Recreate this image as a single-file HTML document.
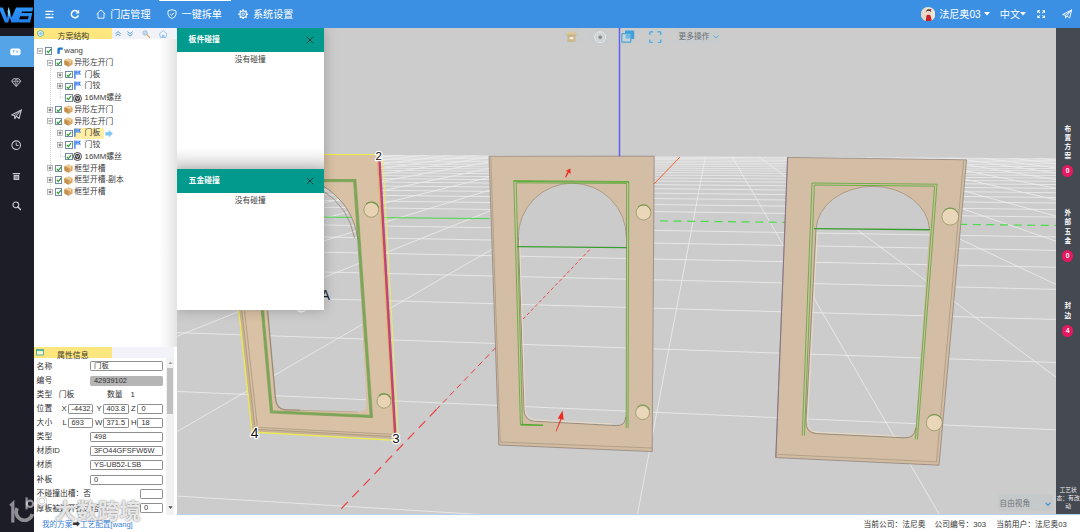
<!DOCTYPE html>
<html lang="zh-CN">
<head>
<meta charset="utf-8">
<title>一键拆单</title>
<style>
*{box-sizing:border-box;margin:0;padding:0}
html,body{width:1080px;height:532px;overflow:hidden;background:#fff}
body{position:relative;font-family:"Liberation Sans","Noto Sans CJK SC",sans-serif;font-size:7.8px;color:#333;-webkit-text-size-adjust:none}
.abs{position:absolute}
/* header */
#hdr{position:absolute;left:0;top:0;width:1080px;height:28px;background:#3c90e4;color:#fff}
#logo{position:absolute;left:0;top:0;width:33.8px;height:28px;background:#000;overflow:hidden}
#hdr .nav{position:absolute;top:0;height:28px;line-height:29.4px;font-size:10.1px;color:#fff;white-space:nowrap}
#hdr svg{position:absolute}
#actline{position:absolute;left:159px;top:0;width:72px;height:1.4px;background:#fff}
/* left side */
#side{position:absolute;left:0;top:28px;width:33.8px;height:504px;background:#1d1d27}
#side .act{position:absolute;left:0;top:8.2px;width:33.8px;height:30.8px;background:#56a4e8}
#side svg{position:absolute;left:10px}
/* left panel */
#lp{position:absolute;left:34px;top:28px;width:142.8px;height:486.5px;background:#fff;overflow:hidden;z-index:2}
.tabbar{position:absolute;left:0;width:142.8px;height:11.2px;background:#f2f3f8}
.tabbar .tab{position:absolute;left:0;top:0;width:78.4px;height:11.2px;background:#fee67e}
.tabbar .tt{position:absolute;left:23.6px;top:3px;font-size:7.9px;line-height:11px;color:#3a3a2a;white-space:nowrap}
.tr{position:absolute;height:11.7px;line-height:11.7px;white-space:nowrap;font-size:7.8px;color:#3c3c3c}
.cb{position:absolute;width:7.4px;height:7.4px;border:0.8px solid #73899f;background:#fff}
.cb svg{position:absolute;left:0;top:0}
.ex{position:absolute;width:5.4px;height:5.4px;border:0.7px solid #a9a9a9;background:#fff}
.ex:before{content:"";position:absolute;left:0.7px;top:1.65px;width:2.6px;height:0.7px;background:#555}
.ex.p:after{content:"";position:absolute;left:1.65px;top:0.7px;width:0.7px;height:2.6px;background:#333}
.pl{position:absolute;font-size:7.8px;line-height:10px;white-space:nowrap;color:#333}
.inp{position:absolute;height:10px;border:0.8px solid #8f8f8f;border-radius:1.2px;background:#fff;font-size:7.4px;line-height:8.6px;padding-left:3px;color:#333;white-space:nowrap;overflow:hidden}
/* scene */
#scene{position:absolute;left:176px;top:28px;width:882px;height:489px;overflow:hidden;background:#cccccc}
svg.scene{position:absolute;left:0;top:0}
/* panels */
.pnwrap{position:absolute;left:34px;top:28px;width:1046px;height:486.5px;overflow:hidden;pointer-events:none}
.pn{position:absolute;left:143px;width:146.6px;background:#fff;box-shadow:0 0 12px rgba(0,0,0,.24)}
.pn .ph{position:absolute;left:0;top:0;width:100%;height:23.4px;background:#019a8d;color:#fff;font-weight:bold;font-size:7.8px;line-height:24.6px;padding-left:11.6px}
.pn .px{position:absolute;right:9.6px;top:7.6px}
.pn .pb{position:absolute;left:0;top:26.9px;width:100%;text-align:center;font-size:7.8px;line-height:10px;color:#444}
/* right bar */
#rb{position:absolute;left:1058px;top:28px;width:22px;height:489px;background:#454952;color:#fff}
#rb .v{position:absolute;left:0;width:22px;text-align:center;font-size:6.6px;line-height:8.3px;font-weight:bold;color:#fff}
#rb .bd{position:absolute;left:5.6px;width:11.4px;height:11.4px;border-radius:50%;background:#e5195f;color:#fff;font-size:6.8px;line-height:11.4px;text-align:center;font-weight:bold}
/* footer */
#ft{position:absolute;left:34px;top:517px;width:1046px;height:15px;background:#fff;border-top:1px solid #b7d2ea;font-size:7.6px;line-height:13px;color:#333}
/* toolbar */
.tb{position:absolute;top:29px;height:15.4px;background:rgba(196,204,206,.55);border-radius:2px}
</style>
</head>
<body>
<!-- HEADER -->
<div id="hdr">
  <div id="actline"></div>
  <!-- menu icon -->
  <svg style="left:44.6px;top:9.6px" width="9" height="9" viewBox="0 0 9 9"><path d="M0.4,1.3H8.4M0.4,4.4H5.4M0.4,7.5H8.4" stroke="#fff" stroke-width="1.3" fill="none"/><path d="M6.6,4.4H8.4" stroke="#fff" stroke-width="1.3"/></svg>
  <!-- refresh -->
  <svg style="left:70.4px;top:9.2px" width="10" height="10" viewBox="0 0 10 10"><path d="M8,3.2A3.6,3.6 0 1 0 8.4,6.2" stroke="#fff" stroke-width="1.5" fill="none"/><path d="M9.2,0.8V4.4H5.6Z" fill="#fff"/></svg>
  <!-- home -->
  <svg style="left:95.6px;top:9.2px" width="10" height="10" viewBox="0 0 10 10"><path d="M0.6,5.2L5,0.9L9.4,5.2M2,4.4V9.2H8V4.4" stroke="#fff" stroke-width="0.9" fill="none"/></svg>
  <div class="nav" style="left:110.2px">门店管理</div>
  <!-- shield -->
  <svg style="left:167px;top:9.2px" width="10" height="10" viewBox="0 0 10 10"><path d="M5,0.7L9,1.9V5.2Q9,8 5,9.5Q1,8 1,5.2V1.9Z" stroke="#fff" stroke-width="0.9" fill="none"/><path d="M3.2,5L4.6,6.3L7,3.8" stroke="#fff" stroke-width="0.9" fill="none"/></svg>
  <div class="nav" style="left:181.6px">一键拆单</div>
  <!-- gear -->
  <svg style="left:238.4px;top:9px" width="10.4" height="10.4" viewBox="0 0 10 10"><circle cx="5" cy="5" r="3.1" stroke="#fff" stroke-width="1" fill="none"/><circle cx="5" cy="5" r="1.2" stroke="#fff" stroke-width="0.8" fill="none"/><path d="M5,0.3V1.9M5,8.1V9.7M0.3,5H1.9M8.1,5H9.7M1.7,1.7L2.8,2.8M7.2,7.2L8.3,8.3M1.7,8.3L2.8,7.2M7.2,2.8L8.3,1.7" stroke="#fff" stroke-width="1.5"/></svg>
  <div class="nav" style="left:253px">系统设置</div>
  <!-- avatar -->
  <svg style="left:920.6px;top:7px" width="14.4" height="14.4" viewBox="0 0 14.4 14.4"><defs><clipPath id="avc"><circle cx="7.2" cy="7.2" r="7.2"/></clipPath></defs><g clip-path="url(#avc)"><rect width="14.4" height="14.4" fill="#efe6da"/><rect x="0" y="0" width="5" height="14.4" fill="#e8d8c4"/><path d="M4.6,14.4L5.4,8.6Q7.4,6.6 9.6,8.4L11,14.4Z" fill="#c3262a"/><circle cx="7.6" cy="5.2" r="2.3" fill="#f3d3bd"/><path d="M5,5.2Q5.2,2 7.8,2.2Q10.4,2.4 10.2,5.6Q9.4,3.6 7.6,3.8Q5.8,3.8 5,5.2Z" fill="#4a2a22"/><path d="M8.6,1.6L10.6,2.6L9.4,3.6Z" fill="#b5262a"/></g></svg>
  <div class="nav" style="left:939.2px">法尼奥03</div>
  <svg style="left:983.6px;top:12.4px" width="6" height="4" viewBox="0 0 6 4"><path d="M0,0H6L3,3.4Z" fill="#fff"/></svg>
  <div class="nav" style="left:999.8px">中文</div>
  <svg style="left:1020.4px;top:12.4px" width="6" height="4" viewBox="0 0 6 4"><path d="M0,0H6L3,3.4Z" fill="#fff"/></svg>
  <!-- fullscreen -->
  <svg style="left:1036.6px;top:10px" width="8.4" height="8.4" viewBox="0 0 8.4 8.4"><path d="M0.3,0.3H3V1.2L1.9,1.3L3.4,2.8L2.8,3.4L1.3,1.9L1.2,3H0.3ZM8.1,0.3V3H7.2L7.1,1.9L5.6,3.4L5,2.8L6.5,1.3L5.4,1.2V0.3ZM0.3,8.1V5.4H1.2L1.3,6.5L2.8,5L3.4,5.6L1.9,7.1L3,7.2V8.1ZM8.1,8.1H5.4V7.2L6.5,7.1L5,5.6L5.6,5L7.1,6.5L7.2,5.4H8.1Z" fill="#fff"/></svg>
  <!-- plane -->
  <svg style="left:1062px;top:9px" width="10.4" height="10.4" viewBox="0 0 10.4 10.4"><path d="M0.6,5.6L9.8,0.8L7.6,9L5,6.8L3.6,9.2L3.4,6.2Z" stroke="#fff" stroke-width="0.9" fill="none" stroke-linejoin="round"/><path d="M3.4,6.2L9.8,0.8L5,6.8" stroke="#fff" stroke-width="0.8" fill="none"/></svg>
  <div id="logo">
    <svg style="left:0;top:0" width="34" height="28" viewBox="0 0 34 28"><defs><linearGradient id="lg" x1="0" y1="0" x2="0" y2="1"><stop offset="0" stop-color="#2f96fb"/><stop offset="1" stop-color="#2380ea"/></linearGradient></defs>
    <path fill="url(#lg)" d="M-1.4,7.5L2.9,7.5L7.2,18.6L8.65,7L11.5,17.8L16.1,7.5L33.1,7.5L32.4,11.4L22,11.4L21.4,12.9L32.3,12.9L30.1,22.6L18.2,22.6L19,19.3L28,19.3L28.6,16.3L20.2,16.3L18,22.6L11.4,22.6L9.6,17.6L8.3,22.6L4.9,22.6Z"/>
    <path fill="#7fdcf2" d="M8.65,7L10.2,12.6L9.4,16.6L8.4,15L7.6,11.6Z"/></svg>
  </div>
</div>

<!-- LEFT SIDE NAV -->
<div id="side">
  <div class="act"></div>
  <!-- item1: card icon -->
  <svg style="top:20px;left:10.4px" width="11" height="8" viewBox="0 0 11 8"><rect x="0.3" y="0.4" width="10.2" height="6.8" rx="1.9" fill="#fff"/><path d="M2.8,2.4H4.6M3.7,2.4V5.2M6,2.4L7,3.8L8.2,2.4M7,3.8V5.2" stroke="#56a4e8" stroke-width="0.7" fill="none"/></svg>
  <!-- diamond -->
  <svg style="top:50.4px;left:11.4px" width="10.4" height="9.4" viewBox="0 0 11 10"><path d="M2.6,0.8H8.4L10.4,3.4L5.5,9.2L0.6,3.4Z" stroke="#c9cacf" stroke-width="1" fill="none" stroke-linejoin="round"/><path d="M0.8,3.5H10.2M4,3.5L5.5,8.4L7,3.5L5.5,1.2Z" stroke="#c9cacf" stroke-width="0.7" fill="none"/></svg>
  <!-- plane -->
  <svg style="top:80.6px;left:11px" width="11" height="11" viewBox="0 0 10.4 10.4"><path d="M0.6,5.6L9.8,0.8L7.6,9L5,6.8L3.6,9.2L3.4,6.2Z" stroke="#c9cacf" stroke-width="1" fill="none" stroke-linejoin="round"/><path d="M3.4,6.2L9.8,0.8L5,6.8" stroke="#c9cacf" stroke-width="0.8" fill="none"/></svg>
  <!-- clock -->
  <svg style="top:112px;left:11.4px" width="10.4" height="10.4" viewBox="0 0 10.4 10.4"><circle cx="5.2" cy="5.2" r="4.3" stroke="#c9cacf" stroke-width="1.1" fill="none"/><path d="M5.2,2.6V5.4H7.6" stroke="#c9cacf" stroke-width="1" fill="none"/></svg>
  <!-- trash -->
  <svg style="top:143.6px;left:12.2px" width="8.8" height="8.8" viewBox="0 0 10 10"><path d="M0.8,1.2H9.2V2.6H0.8ZM1.8,3.4H8.2V9.2H1.8Z" fill="#c9cacf"/><path d="M3.6,4.6V8M5,4.6V8M6.4,4.6V8" stroke="#1d1d27" stroke-width="0.5"/></svg>
  <!-- search -->
  <svg style="top:173.4px;left:11.6px" width="9.6" height="9.6" viewBox="0 0 11 11"><circle cx="4.4" cy="4.4" r="3.3" stroke="#c9cacf" stroke-width="1.3" fill="none"/><path d="M6.8,6.8L9.8,9.8" stroke="#c9cacf" stroke-width="1.8" stroke-linecap="round"/></svg>
</div>
<div id="lp">
<div class="tabbar" style="top:0">
<div class="tab"></div>
<svg class="abs" style="left:3.2px;top:1.6px" width="7" height="7" viewBox="0 0 7 7"><path d="M3.5,0.3L6.4,1.9V5.1L3.5,6.7L0.6,5.1V1.9Z" fill="#e8f6f4" stroke="#39a89a" stroke-width="0.7"/><path d="M2.2,2.6V4.6M3.5,2.4V4.6M4.8,2.6V4.6" stroke="#2c8fd0" stroke-width="0.6"/></svg>
<div class="tt">方案结构</div>
<svg class="abs" style="left:81px;top:2.8px" width="6.2" height="5.6" viewBox="0 0 6.2 5.6"><path d="M0.5,2.7L3.1,0.6L5.7,2.7M0.5,5.1L3.1,3L5.7,5.1" stroke="#5b9fe0" stroke-width="1" fill="none"/></svg>
<svg class="abs" style="left:92.6px;top:3.1px" width="6.2" height="5.6" viewBox="0 0 6.2 5.6"><path d="M0.5,0.6L3.1,2.7L5.7,0.6M0.5,2.9L3.1,5L5.7,2.9" stroke="#5b9fe0" stroke-width="1" fill="none"/></svg>
<svg class="abs" style="left:107.6px;top:1.6px" width="9" height="9" viewBox="0 0 9 9"><circle cx="3.1" cy="2.9" r="2.2" fill="#c4dcf2" stroke="#8fb2d6" stroke-width="0.7"/><path d="M4.9,4.7L7.6,7.4" stroke="#dfa55a" stroke-width="1.2" stroke-linecap="round"/></svg>
<svg class="abs" style="left:125px;top:2px" width="8.4" height="8" viewBox="0 0 8.4 8"><path d="M0.6,3.7L4.2,0.6L7.8,3.7L7,7.4H1.4Z" stroke="#7db4e4" stroke-width="0.8" fill="#f4f9ff" stroke-linejoin="round"/><path d="M3.4,7.4V5.2H5V7.4" stroke="#7db4e4" stroke-width="0.7" fill="#a9cdee"/></svg>
</div>
<div class="abs" style="left:124px;top:11.2px;width:18.8px;height:307.6px;background:linear-gradient(to right,rgba(0,0,0,0),rgba(0,0,0,.035) 45%,rgba(0,0,0,.11))"></div>
<div class="abs" style="left:15.5px;top:28.0px;width:0;height:135.0px;border-left:0.6px dotted #d4d4d4"></div>
<div class="abs" style="left:25.7px;top:40.0px;width:0;height:29.2px;border-left:0.6px dotted #d4d4d4"></div>
<div class="abs" style="left:25.7px;top:99.0px;width:0;height:28.9px;border-left:0.6px dotted #d4d4d4"></div>
<div class="abs" style="left:26.0px;top:68.9px;width:5.0px;height:0;border-top:0.6px dotted #d4d4d4"></div>
<div class="abs" style="left:26.0px;top:127.6px;width:5.0px;height:0;border-top:0.6px dotted #d4d4d4"></div>
<svg class="abs" style="left:2.6px;top:20.0px" width="6" height="6" viewBox="0 0 6 6"><rect x="0.4" y="0.4" width="5.2" height="5.2" fill="#fff" stroke="#9a9a9a" stroke-width="0.7"/><path d="M1.5,3H4.5" stroke="#444" stroke-width="0.8"/></svg>
<div class="cb" style="left:10.9px;top:19.3px"><svg width="5.8" height="5.8" viewBox="0 0 6 6"><path d="M0.9,3L2.4,4.7L5.2,1.1" stroke="#22a02a" stroke-width="1.25" fill="none"/></svg></div>
<svg class="abs" style="left:23.4px;top:19.4px" width="6" height="7" viewBox="0 0 6 7"><path d="M0.4,6.8V2.4Q0.4,0.6 2.2,0.6H5.8V2.8H2.8V6.8Z" fill="#1b78d4"/></svg>
<div class="tr" style="left:30.3px;top:17.1px">wang</div>
<svg class="abs" style="left:12.8px;top:31.7px" width="6" height="6" viewBox="0 0 6 6"><rect x="0.4" y="0.4" width="5.2" height="5.2" fill="#fff" stroke="#9a9a9a" stroke-width="0.7"/><path d="M1.5,3H4.5" stroke="#444" stroke-width="0.8"/></svg>
<div class="cb" style="left:21.1px;top:31.0px"><svg width="5.8" height="5.8" viewBox="0 0 6 6"><path d="M0.9,3L2.4,4.7L5.2,1.1" stroke="#22a02a" stroke-width="1.25" fill="none"/></svg></div>
<svg class="abs" style="left:30.1px;top:30.1px" width="9" height="9" viewBox="0 0 9 9"><path d="M4.5,0.4L8.6,2.2V6.6L4.5,8.7L0.4,6.6V2.2Z" fill="#d9a868"/><path d="M4.5,0.4L8.6,2.2L4.5,4.1L0.4,2.2Z" fill="#ecc58b"/><path d="M4.5,4.1V8.7L0.4,6.6V2.2Z" fill="#c58f4e"/><path d="M2.3,1.3L6.5,3.2V5" stroke="#f3dcb4" stroke-width="0.7" fill="none"/></svg>
<div class="tr" style="left:40.3px;top:28.8px">异形左开门</div>
<svg class="abs" style="left:23.0px;top:43.5px" width="6" height="6" viewBox="0 0 6 6"><rect x="0.4" y="0.4" width="5.2" height="5.2" fill="#fff" stroke="#9a9a9a" stroke-width="0.7"/><path d="M1.5,3H4.5" stroke="#444" stroke-width="0.8"/><path d="M3,1.5V4.5" stroke="#444" stroke-width="0.8"/></svg>
<div class="cb" style="left:31.2px;top:42.8px"><svg width="5.8" height="5.8" viewBox="0 0 6 6"><path d="M0.9,3L2.4,4.7L5.2,1.1" stroke="#22a02a" stroke-width="1.25" fill="none"/></svg></div>
<svg class="abs" style="left:40.0px;top:41.5px" width="8" height="9" viewBox="0 0 8 9"><path d="M0.9,0.4V8.8" stroke="#2a6fe0" stroke-width="1.3"/><path d="M1.6,0.8H7.2L5.6,2.6L7.2,4.6H1.6Z" fill="#3a7ff0"/><path d="M2.6,1.8H5M2.6,3.4H5" stroke="#fff" stroke-width="0.5"/></svg>
<div class="tr" style="left:50.6px;top:40.6px">门板</div>
<svg class="abs" style="left:23.0px;top:55.2px" width="6" height="6" viewBox="0 0 6 6"><rect x="0.4" y="0.4" width="5.2" height="5.2" fill="#fff" stroke="#9a9a9a" stroke-width="0.7"/><path d="M1.5,3H4.5" stroke="#444" stroke-width="0.8"/><path d="M3,1.5V4.5" stroke="#444" stroke-width="0.8"/></svg>
<div class="cb" style="left:31.2px;top:54.5px"><svg width="5.8" height="5.8" viewBox="0 0 6 6"><path d="M0.9,3L2.4,4.7L5.2,1.1" stroke="#22a02a" stroke-width="1.25" fill="none"/></svg></div>
<svg class="abs" style="left:40.0px;top:53.2px" width="8" height="9" viewBox="0 0 8 9"><path d="M0.9,0.4V8.8" stroke="#2a6fe0" stroke-width="1.3"/><path d="M1.6,0.8H7.2L5.6,2.6L7.2,4.6H1.6Z" fill="#3a7ff0"/><path d="M2.6,1.8H5M2.6,3.4H5" stroke="#fff" stroke-width="0.5"/></svg>
<div class="tr" style="left:50.6px;top:52.3px">门铰</div>
<div class="cb" style="left:31.2px;top:66.3px"><svg width="5.8" height="5.8" viewBox="0 0 6 6"><path d="M0.9,3L2.4,4.7L5.2,1.1" stroke="#22a02a" stroke-width="1.25" fill="none"/></svg></div>
<svg class="abs" style="left:39.1px;top:65.5px" width="9" height="9" viewBox="0 0 9 9"><circle cx="4.5" cy="4.5" r="4" fill="#fff" stroke="#333" stroke-width="0.9"/><circle cx="4.5" cy="4.5" r="2.7" fill="#444"/><path d="M3,3.2L4.5,5.6L6,3.2" stroke="#fff" stroke-width="0.8" fill="none"/></svg>
<div class="tr" style="left:50.6px;top:64.1px">16MM螺丝</div>
<svg class="abs" style="left:12.8px;top:78.7px" width="6" height="6" viewBox="0 0 6 6"><rect x="0.4" y="0.4" width="5.2" height="5.2" fill="#fff" stroke="#9a9a9a" stroke-width="0.7"/><path d="M1.5,3H4.5" stroke="#444" stroke-width="0.8"/><path d="M3,1.5V4.5" stroke="#444" stroke-width="0.8"/></svg>
<div class="cb" style="left:21.1px;top:78.0px"><svg width="5.8" height="5.8" viewBox="0 0 6 6"><path d="M0.9,3L2.4,4.7L5.2,1.1" stroke="#22a02a" stroke-width="1.25" fill="none"/></svg></div>
<svg class="abs" style="left:30.1px;top:77.1px" width="9" height="9" viewBox="0 0 9 9"><path d="M4.5,0.4L8.6,2.2V6.6L4.5,8.7L0.4,6.6V2.2Z" fill="#d9a868"/><path d="M4.5,0.4L8.6,2.2L4.5,4.1L0.4,2.2Z" fill="#ecc58b"/><path d="M4.5,4.1V8.7L0.4,6.6V2.2Z" fill="#c58f4e"/><path d="M2.3,1.3L6.5,3.2V5" stroke="#f3dcb4" stroke-width="0.7" fill="none"/></svg>
<div class="tr" style="left:40.3px;top:75.8px">异形左开门</div>
<svg class="abs" style="left:12.8px;top:90.4px" width="6" height="6" viewBox="0 0 6 6"><rect x="0.4" y="0.4" width="5.2" height="5.2" fill="#fff" stroke="#9a9a9a" stroke-width="0.7"/><path d="M1.5,3H4.5" stroke="#444" stroke-width="0.8"/></svg>
<div class="cb" style="left:21.1px;top:89.7px"><svg width="5.8" height="5.8" viewBox="0 0 6 6"><path d="M0.9,3L2.4,4.7L5.2,1.1" stroke="#22a02a" stroke-width="1.25" fill="none"/></svg></div>
<svg class="abs" style="left:30.1px;top:88.8px" width="9" height="9" viewBox="0 0 9 9"><path d="M4.5,0.4L8.6,2.2V6.6L4.5,8.7L0.4,6.6V2.2Z" fill="#d9a868"/><path d="M4.5,0.4L8.6,2.2L4.5,4.1L0.4,2.2Z" fill="#ecc58b"/><path d="M4.5,4.1V8.7L0.4,6.6V2.2Z" fill="#c58f4e"/><path d="M2.3,1.3L6.5,3.2V5" stroke="#f3dcb4" stroke-width="0.7" fill="none"/></svg>
<div class="tr" style="left:40.3px;top:87.5px">异形左开门</div>
<svg class="abs" style="left:23.0px;top:102.2px" width="6" height="6" viewBox="0 0 6 6"><rect x="0.4" y="0.4" width="5.2" height="5.2" fill="#fff" stroke="#9a9a9a" stroke-width="0.7"/><path d="M1.5,3H4.5" stroke="#444" stroke-width="0.8"/><path d="M3,1.5V4.5" stroke="#444" stroke-width="0.8"/></svg>
<div class="cb" style="left:31.2px;top:101.5px"><svg width="5.8" height="5.8" viewBox="0 0 6 6"><path d="M0.9,3L2.4,4.7L5.2,1.1" stroke="#22a02a" stroke-width="1.25" fill="none"/></svg></div>
<div class="abs" style="left:40.4px;top:100.0px;width:29.8px;height:11.2px;background:#ffeea4;border-radius:1.5px"></div>
<svg class="abs" style="left:71.2px;top:101.8px" width="8" height="7.4" viewBox="0 0 8 7.4"><path d="M0.5,2.2H4V0.5L7.6,3.7L4,6.9V5.2H0.5Z" fill="#7cc4f2" stroke="#9bd2f6" stroke-width="0.6" stroke-linejoin="round"/></svg>
<svg class="abs" style="left:40.0px;top:100.2px" width="8" height="9" viewBox="0 0 8 9"><path d="M0.9,0.4V8.8" stroke="#2a6fe0" stroke-width="1.3"/><path d="M1.6,0.8H7.2L5.6,2.6L7.2,4.6H1.6Z" fill="#3a7ff0"/><path d="M2.6,1.8H5M2.6,3.4H5" stroke="#fff" stroke-width="0.5"/></svg>
<div class="tr" style="left:50.6px;top:99.3px">门板</div>
<svg class="abs" style="left:23.0px;top:113.9px" width="6" height="6" viewBox="0 0 6 6"><rect x="0.4" y="0.4" width="5.2" height="5.2" fill="#fff" stroke="#9a9a9a" stroke-width="0.7"/><path d="M1.5,3H4.5" stroke="#444" stroke-width="0.8"/><path d="M3,1.5V4.5" stroke="#444" stroke-width="0.8"/></svg>
<div class="cb" style="left:31.2px;top:113.2px"><svg width="5.8" height="5.8" viewBox="0 0 6 6"><path d="M0.9,3L2.4,4.7L5.2,1.1" stroke="#22a02a" stroke-width="1.25" fill="none"/></svg></div>
<svg class="abs" style="left:40.0px;top:111.9px" width="8" height="9" viewBox="0 0 8 9"><path d="M0.9,0.4V8.8" stroke="#2a6fe0" stroke-width="1.3"/><path d="M1.6,0.8H7.2L5.6,2.6L7.2,4.6H1.6Z" fill="#3a7ff0"/><path d="M2.6,1.8H5M2.6,3.4H5" stroke="#fff" stroke-width="0.5"/></svg>
<div class="tr" style="left:50.6px;top:111.0px">门铰</div>
<div class="cb" style="left:31.2px;top:125.0px"><svg width="5.8" height="5.8" viewBox="0 0 6 6"><path d="M0.9,3L2.4,4.7L5.2,1.1" stroke="#22a02a" stroke-width="1.25" fill="none"/></svg></div>
<svg class="abs" style="left:39.1px;top:124.2px" width="9" height="9" viewBox="0 0 9 9"><circle cx="4.5" cy="4.5" r="4" fill="#fff" stroke="#333" stroke-width="0.9"/><circle cx="4.5" cy="4.5" r="2.7" fill="#444"/><path d="M3,3.2L4.5,5.6L6,3.2" stroke="#fff" stroke-width="0.8" fill="none"/></svg>
<div class="tr" style="left:50.6px;top:122.8px">16MM螺丝</div>
<svg class="abs" style="left:12.8px;top:137.4px" width="6" height="6" viewBox="0 0 6 6"><rect x="0.4" y="0.4" width="5.2" height="5.2" fill="#fff" stroke="#9a9a9a" stroke-width="0.7"/><path d="M1.5,3H4.5" stroke="#444" stroke-width="0.8"/><path d="M3,1.5V4.5" stroke="#444" stroke-width="0.8"/></svg>
<div class="cb" style="left:21.1px;top:136.7px"><svg width="5.8" height="5.8" viewBox="0 0 6 6"><path d="M0.9,3L2.4,4.7L5.2,1.1" stroke="#22a02a" stroke-width="1.25" fill="none"/></svg></div>
<svg class="abs" style="left:30.1px;top:135.8px" width="9" height="9" viewBox="0 0 9 9"><path d="M4.5,0.4L8.6,2.2V6.6L4.5,8.7L0.4,6.6V2.2Z" fill="#d9a868"/><path d="M4.5,0.4L8.6,2.2L4.5,4.1L0.4,2.2Z" fill="#ecc58b"/><path d="M4.5,4.1V8.7L0.4,6.6V2.2Z" fill="#c58f4e"/><path d="M2.3,1.3L6.5,3.2V5" stroke="#f3dcb4" stroke-width="0.7" fill="none"/></svg>
<div class="tr" style="left:40.3px;top:134.5px">框型开槽</div>
<svg class="abs" style="left:12.8px;top:149.1px" width="6" height="6" viewBox="0 0 6 6"><rect x="0.4" y="0.4" width="5.2" height="5.2" fill="#fff" stroke="#9a9a9a" stroke-width="0.7"/><path d="M1.5,3H4.5" stroke="#444" stroke-width="0.8"/><path d="M3,1.5V4.5" stroke="#444" stroke-width="0.8"/></svg>
<div class="cb" style="left:21.1px;top:148.4px"><svg width="5.8" height="5.8" viewBox="0 0 6 6"><path d="M0.9,3L2.4,4.7L5.2,1.1" stroke="#22a02a" stroke-width="1.25" fill="none"/></svg></div>
<svg class="abs" style="left:30.1px;top:147.5px" width="9" height="9" viewBox="0 0 9 9"><path d="M4.5,0.4L8.6,2.2V6.6L4.5,8.7L0.4,6.6V2.2Z" fill="#d9a868"/><path d="M4.5,0.4L8.6,2.2L4.5,4.1L0.4,2.2Z" fill="#ecc58b"/><path d="M4.5,4.1V8.7L0.4,6.6V2.2Z" fill="#c58f4e"/><path d="M2.3,1.3L6.5,3.2V5" stroke="#f3dcb4" stroke-width="0.7" fill="none"/></svg>
<div class="tr" style="left:40.3px;top:146.2px">框型开槽-副本</div>
<svg class="abs" style="left:12.8px;top:160.9px" width="6" height="6" viewBox="0 0 6 6"><rect x="0.4" y="0.4" width="5.2" height="5.2" fill="#fff" stroke="#9a9a9a" stroke-width="0.7"/><path d="M1.5,3H4.5" stroke="#444" stroke-width="0.8"/><path d="M3,1.5V4.5" stroke="#444" stroke-width="0.8"/></svg>
<div class="cb" style="left:21.1px;top:160.2px"><svg width="5.8" height="5.8" viewBox="0 0 6 6"><path d="M0.9,3L2.4,4.7L5.2,1.1" stroke="#22a02a" stroke-width="1.25" fill="none"/></svg></div>
<svg class="abs" style="left:30.1px;top:159.3px" width="9" height="9" viewBox="0 0 9 9"><path d="M4.5,0.4L8.6,2.2V6.6L4.5,8.7L0.4,6.6V2.2Z" fill="#d9a868"/><path d="M4.5,0.4L8.6,2.2L4.5,4.1L0.4,2.2Z" fill="#ecc58b"/><path d="M4.5,4.1V8.7L0.4,6.6V2.2Z" fill="#c58f4e"/><path d="M2.3,1.3L6.5,3.2V5" stroke="#f3dcb4" stroke-width="0.7" fill="none"/></svg>
<div class="tr" style="left:40.3px;top:158.0px">框型开槽</div>
<div class="tabbar" style="top:318.8px;width:140px">
<div class="tab"></div>
<svg class="abs" style="left:2.4px;top:2.4px" width="8" height="6.4" viewBox="0 0 8 6.4"><rect x="0.4" y="0.4" width="7.2" height="5.6" fill="#fdf7d4" stroke="#35a391" stroke-width="0.8"/><path d="M0.4,1.6H7.6" stroke="#35a391" stroke-width="0.9"/></svg>
<div class="tt" style="left:23px;top:3.2px">属性信息</div>
</div>
<div class="pl" style="left:2.6px;top:333.7px">名称</div>
<div class="inp" style="left:56.0px;top:333.4px;width:72.8px;">门板</div>
<div class="pl" style="left:2.6px;top:347.8px">编号</div>
<div class="inp" style="left:56.0px;top:347.5px;width:72.8px;background:#b5b5b5;border-color:#b5b5b5;">42939102</div>
<div class="pl" style="left:2.6px;top:361.8px">类型</div>
<div class="pl" style="left:24.8px;top:361.8px">门板</div>
<div class="pl" style="left:73.0px;top:361.8px">数量</div>
<div class="pl" style="left:96.6px;top:361.8px">1</div>
<div class="pl" style="left:2.6px;top:375.9px">位置</div>
<div class="pl" style="left:27.6px;top:375.9px">X</div>
<div class="inp" style="left:33.5px;top:375.6px;width:25.9px;">-4432.</div>
<div class="pl" style="left:62.6px;top:375.9px">Y</div>
<div class="inp" style="left:68.5px;top:375.6px;width:26.1px;">403.8</div>
<div class="pl" style="left:97.0px;top:375.9px">Z</div>
<div class="inp" style="left:103.4px;top:375.6px;width:25.4px;">0</div>
<div class="pl" style="left:2.6px;top:389.9px">大小</div>
<div class="pl" style="left:28.4px;top:389.9px">L</div>
<div class="inp" style="left:33.5px;top:389.6px;width:25.9px;">693</div>
<div class="pl" style="left:61.0px;top:389.9px">W</div>
<div class="inp" style="left:68.5px;top:389.6px;width:26.1px;">371.5</div>
<div class="pl" style="left:97.0px;top:389.9px">H</div>
<div class="inp" style="left:103.4px;top:389.6px;width:25.4px;">18</div>
<div class="pl" style="left:2.6px;top:404.0px">类型</div>
<div class="inp" style="left:56.0px;top:403.7px;width:72.8px;">498</div>
<div class="pl" style="left:2.6px;top:418.1px">材质ID</div>
<div class="inp" style="left:56.0px;top:417.8px;width:72.8px;">3FO44GFSFW6W</div>
<div class="pl" style="left:2.6px;top:432.1px">材质</div>
<div class="inp" style="left:56.0px;top:431.8px;width:72.8px;">YS-UB52-LSB</div>
<div class="pl" style="left:2.6px;top:446.8px">补板</div>
<div class="inp" style="left:56.0px;top:446.5px;width:72.8px;">0</div>
<div class="pl" style="left:2.6px;top:461.1px">不碰撞出槽：否</div>
<div class="inp" style="left:106.0px;top:460.8px;width:22.8px;"></div>
<div class="pl" style="left:2.6px;top:475.7px">厚板被边开孔：否</div>
<div class="inp" style="left:106.0px;top:475.4px;width:22.8px;">0</div>
<div class="abs" style="left:132px;top:330px;width:8px;height:156.5px;background:#f1f1f1"></div>
<div class="abs" style="left:132.6px;top:339.6px;width:6.8px;height:46px;background:#c1c1c1"></div>
<svg class="abs" style="left:133.6px;top:333px" width="5" height="3.4" viewBox="0 0 5 3.4"><path d="M0.3,3.2L2.5,0.4L4.7,3.2Z" fill="#a3a3a3"/></svg>
<svg class="abs" style="left:133.6px;top:478.4px" width="5" height="3.4" viewBox="0 0 5 3.4"><path d="M0.3,0.3L2.5,3.1L4.7,0.3Z" fill="#505050"/></svg>
</div><!-- SCENE -->
<div id="scene">
<svg class="scene" width="882" height="489" viewBox="176 28 882 489">
<defs><clipPath id="gclip"><path d="M176,153.8 L1058,158.3 L1058,530 L176,530 Z"/></clipPath></defs>
<rect x="176" y="28" width="882" height="489" fill="#cccccc"/>

<g clip-path="url(#gclip)"><path d="M176 151.6L1058 155.8M176 152.5L1058 156.9M176 153.5L1058 158.0M176 154.6L1058 159.2M176 155.7L1058 160.5M176 156.9L1058 161.9M176 158.3L1058 163.4M176 159.7L1058 165.1M176 161.2L1058 166.8M176 162.9L1058 168.7M176 164.7L1058 170.8M176 166.7L1058 173.0M176 168.8L1058 175.5M176 171.2L1058 178.2M176 173.9L1058 181.3M176 176.8L1058 184.6M176 180.1L1058 188.4M176 183.9L1058 192.7M176 188.1L1058 197.5M176 193.0L1058 203.1M176 198.6L1058 209.6M176 205.2L1058 217.1M176 222.6L1058 237.0M176 234.3L1058 250.4M176 249.2L1058 267.3M176 268.5L1058 289.4M176 294.8L1058 319.5M176 332.6L1058 362.6M176 391.4L1058 429.9M176 496.0L1058 549.5M-216.5 152.0L-12287.0 542.0M-193.4 152.0L-11964.0 542.0M-170.4 152.0L-11641.0 542.0M-147.3 152.0L-11318.1 542.0M-124.2 152.0L-10995.1 542.0M-101.1 152.0L-10672.1 542.0M-78.1 152.0L-10349.1 542.0M-55.0 152.0L-10026.1 542.0M-31.9 152.0L-9703.2 542.0M-8.9 152.0L-9380.2 542.0M14.2 152.0L-9057.2 542.0M37.3 152.0L-8734.2 542.0M60.3 152.0L-8411.2 542.0M83.4 152.0L-8088.3 542.0M106.5 152.0L-7765.3 542.0M129.5 152.0L-7442.3 542.0M152.6 152.0L-7119.3 542.0M175.7 152.0L-6796.3 542.0M198.8 152.0L-6473.4 542.0M221.8 152.0L-6150.4 542.0M244.9 152.0L-5827.4 542.0M268.0 152.0L-5504.4 542.0M291.0 152.0L-5181.4 542.0M314.1 152.0L-4858.5 542.0M337.2 152.0L-4535.5 542.0M360.2 152.0L-4212.5 542.0M383.3 152.0L-3889.5 542.0M406.4 152.0L-3566.5 542.0M429.5 152.0L-3243.6 542.0M452.5 152.0L-2920.6 542.0M475.6 152.0L-2597.6 542.0M498.7 152.0L-2274.6 542.0M521.7 152.0L-1951.6 542.0M544.8 152.0L-1628.7 542.0M567.9 152.0L-1305.7 542.0M591.0 152.0L-982.7 542.0M614.0 152.0L-659.7 542.0M637.1 152.0L-336.7 542.0M660.2 152.0L-13.8 542.0M706.3 152.0L632.2 542.0M729.4 152.0L955.2 542.0M752.4 152.0L1278.2 542.0M775.5 152.0L1601.1 542.0M798.6 152.0L1924.1 542.0M821.6 152.0L2247.1 542.0M844.7 152.0L2570.1 542.0M867.8 152.0L2893.1 542.0M890.9 152.0L3216.0 542.0M913.9 152.0L3539.0 542.0M937.0 152.0L3862.0 542.0M960.1 152.0L4185.0 542.0M983.1 152.0L4508.0 542.0M1006.2 152.0L4830.9 542.0M1029.3 152.0L5153.9 542.0M1052.3 152.0L5476.9 542.0M1075.4 152.0L5799.9 542.0M1098.5 152.0L6122.9 542.0M1121.6 152.0L6445.8 542.0M1144.6 152.0L6768.8 542.0M1167.7 152.0L7091.8 542.0M1190.8 152.0L7414.8 542.0M1213.8 152.0L7737.8 542.0M1236.9 152.0L8060.7 542.0M1260.0 152.0L8383.7 542.0M1283.0 152.0L8706.7 542.0M1306.1 152.0L9029.7 542.0M1329.2 152.0L9352.7 542.0M1352.3 152.0L9675.6 542.0M1375.3 152.0L9998.6 542.0M1398.4 152.0L10321.6 542.0M1421.5 152.0L10644.6 542.0M1444.5 152.0L10967.6 542.0M1467.6 152.0L11290.5 542.0M1490.7 152.0L11613.5 542.0M1513.8 152.0L11936.5 542.0M1536.8 152.0L12259.5 542.0M1559.9 152.0L12582.5 542.0M1583.0 152.0L12905.4 542.0M1606.0 152.0L13228.4 542.0M1629.1 152.0L13551.4 542.0" stroke="#ededed" stroke-width="0.82" fill="none"/></g><!-- axes -->
<line x1="619.5" y1="28" x2="619.5" y2="157" stroke="#625cf0" stroke-width="1.5"/>
<line x1="176" y1="215.8" x2="489.5" y2="218.6" stroke="#48d848" stroke-width="1"/>
<line x1="660" y1="220.9" x2="1058" y2="225.5" stroke="#48dc48" stroke-width="1.2" stroke-dasharray="8 5.6"/>
<line x1="593.6" y1="245.6" x2="517.5" y2="324.9" stroke="#ee3b3b" stroke-width="0.9" stroke-dasharray="3.4 2.4"/>
<line x1="517.5" y1="324.9" x2="436.4" y2="409.5" stroke="#ee3b3b" stroke-width="1.0" stroke-dasharray="6 4.2"/>
<line x1="436.4" y1="409.5" x2="340.0" y2="510.0" stroke="#ee3b3b" stroke-width="1.15" stroke-dasharray="9.5 6.5"/>
<line x1="654" y1="184" x2="680" y2="157" stroke="#f0602a" stroke-width="1"/>

<!-- door 1 (selected) -->
<g>
  <path fill="#c9b394" fill-rule="evenodd" d="M221.5,155 L377.3,155 L394.6,439 L252.5,431.3 Z M265.8,290 L274.9,398 Q276,409.6 285,410 L358,412 Q367.5,412.3 366.8,404 L357.8,239 Q353,205 324,186.5 L257,186.5 Z"/>
  <path fill="#d8c1a4" fill-rule="evenodd" d="M224.2,155 L376.5,155 L393.7,436.6 L255.2,429.2 Z M265.8,290 L274.9,398 Q276,409.6 285,410 L358,412 Q367.5,412.3 366.8,404 L357.8,239 Q353,205 324,186.5 L257,186.5 Z"/>
  <path fill="none" stroke="#8f7f6a" stroke-width="0.5" d="M242,311 L255.2,429.2 L393.7,436.6 M244.6,311 L257.4,427.4 L393,434.4"/>
  <path fill="none" stroke="#9c8a72" stroke-width="1.3" d="M267.6,311 L275.4,398 Q276.4,409.4 285,409.8 L300,410.2"/>
  <path fill="none" stroke="#b9a58a" stroke-width="0.8" d="M300,410.4 L358,412"/>
  <path fill="none" stroke="#8c7a64" stroke-width="0.7" d="M324,186.5 Q353,205 357.8,239 M322,190 Q349,207 354.5,238"/>
  <!-- green groove -->
  <path fill="none" stroke="#7aa857" stroke-width="2" d="M300,180.6 L354.8,180.6 L371.3,416.4 L271.5,411.9 L262.5,311 L250.7,180.6"/>
  <path fill="none" stroke="#5f9440" stroke-width="0.55" d="M300,179.5 L356,179.5 L372.6,417.6 L270.4,413 L261.3,311 M300,181.7 L353.6,181.7 L370,415.2 L272.6,410.8 L263.7,311"/>
  <!-- selection outline -->
  <path fill="none" stroke="#f0ec45" stroke-width="1.2" d="M238.8,311 L252,432 L395,440.3 M324,154.5 L377,154.5"/>
  <path fill="none" stroke="#e6b86c" stroke-width="1.3" d="M377.4,157 L393.9,437"/>
  <path fill="none" stroke="#c2446f" stroke-width="2.5" d="M379.4,159 L395.3,436"/>
  <path fill="none" stroke="#ece670" stroke-width="1.1" d="M383,160 L398,433"/>
  <circle cx="371.3" cy="209.8" r="7.4" fill="#e9d3b5" stroke="#8a8f5c" stroke-width="0.7"/>
  <path d="M366,204.2 A7.6,7.6 0 0 1 378.6,207.6" fill="none" stroke="#6c9a48" stroke-width="1.2"/>
  <circle cx="384" cy="401.2" r="7" fill="#e9d3b5" stroke="#8a8f5c" stroke-width="0.7"/>
  <path d="M379,395.8 A7.2,7.2 0 0 1 391,399" fill="none" stroke="#6c9a48" stroke-width="1.2"/>
</g>

<!-- door 2 -->
<g>
  <path fill="#cbcbcb" d="M517,247.2 L517,236 A55,55 0 0 1 627.4,236 L627.4,248 Z"/>
  <path fill="#d1bca2" fill-rule="evenodd" d="M489,156.2 L654.2,156.2 L652.2,451.6 L498.8,445 Z M518,247 L518,237.3 A54.3,54.3 0 0 1 626.6,237.3 L626,416 Q626,426.4 616,426 L534.5,421.6 Q524.3,421 523.6,410 Z"/>
  <path fill="#d3bea5" fill-rule="evenodd" d="M490.8,157.2 L653.8,157.2 L651.9,448 L500.2,442 Z
     M518,247 L518,237.3 A54.3,54.3 0 0 1 626.6,237.3 L626,416 Q626,426.4 616,426 L534.5,421.6 Q524.3,421 523.6,410 Z"/>
  <path fill="none" stroke="#8d7c68" stroke-width="0.8" d="M518.4,237 L524,410 Q524.6,420.6 534.5,421.2 L616,425.6 Q625.5,426 625.6,417"/>
  <path fill="none" stroke="#a39078" stroke-width="0.8" d="M518.2,237.3 A54.1,54.1 0 0 1 626.4,237.3"/>
  <path fill="none" stroke="#eadbc4" stroke-width="1" d="M519.6,240 L525.2,409 Q526,419.4 535,420 L612,424"/>
  <path fill="none" stroke="#857570" stroke-width="0.65" d="M489,156.2 L654.2,156.2 L652.2,451.6 L498.8,445 Z"/>
  <path fill="none" stroke="#a08d7a" stroke-width="0.6" d="M490.8,157.2 L500.2,442 L651.9,448"/>
  <!-- green -->
  <path fill="none" stroke="#55a832" stroke-width="0.8" d="M513.8,180.6 L628.8,181.5 L628,428 M516.2,182.8 L626.6,183.4 L626.2,428 M513.8,180.6 L520.4,424.4 M516.2,182.8 L522.4,424"/>
  <path fill="none" stroke="#55a832" stroke-width="1.6" d="M520.4,424.6 L543,425.2"/>
  <path fill="none" stroke="#3b9d30" stroke-width="1.4" d="M517,246.6 L627,247.6"/>
  <path fill="none" stroke="#55a832" stroke-width="0.9" d="M513.8,181.4 L628.8,182.3"/>
  <circle cx="643.5" cy="212.6" r="7.4" fill="#ead6b8" stroke="#8a8f5c" stroke-width="0.7"/>
  <path d="M638,207 A7.6,7.6 0 0 1 650.6,210" fill="none" stroke="#6c9a48" stroke-width="1"/>
  <circle cx="642.6" cy="412.6" r="7" fill="#ead6b8" stroke="#8a8f5c" stroke-width="0.7"/>
  <path d="M637.4,407.2 A7.2,7.2 0 0 1 649.6,410" fill="none" stroke="#6c9a48" stroke-width="1"/>
  <!-- red arrows -->
  <path fill="#ee2a1e" d="M565,177 L567.6,171.6 L565.6,171 L570.4,168.4 L570.6,174 L568.8,172.6 L566,177.4 Z"/>
  <path fill="#ee2a1e" d="M555.6,431.6 L560.4,419 L557.8,418.4 L562.6,410.6 L563.6,419.8 L561.6,419.2 L556.2,431.8 Z"/>
</g>

<!-- door 3 -->
<g>
  <path fill="#cbcbcb" d="M815,229.4 A57.6,45.6 0 0 1 930.4,230 Z"/>
  <path fill="#d1bca2" fill-rule="evenodd" d="M787.6,157.4 L966.6,159.8 L939,465.2 L775.8,457.6 Z M816,229 A56.8,44.8 0 0 1 929.5,229.5 L916.4,420 Q915.4,438.6 905,438 L826,434.2 Q805.2,433.4 805.8,421 Z"/>
  <path fill="#d3bea5" fill-rule="evenodd" d="M788.6,158.4 L963.6,160.6 L936.4,461.8 L777.6,454.4 Z
     M816,229 A56.8,44.8 0 0 1 929.5,229.5 L916.4,420 Q915.4,438.6 905,438 L826,434.2 Q805.2,433.4 805.8,421 Z"/>
  <path fill="none" stroke="#8d7c68" stroke-width="0.8" d="M816,229 L806,421 Q805.4,433 816.4,433.6 L905,437.8 Q914.8,438 915.8,428"/>
  <path fill="none" stroke="#a39078" stroke-width="0.8" d="M816,229 A56.8,44.8 0 0 1 929.5,229.5"/>
  <path fill="none" stroke="#eadbc4" stroke-width="1" d="M817.4,232 L807.6,420 Q807.4,431.6 817,432.2 L900,436.2"/>
  <path fill="none" stroke="#857570" stroke-width="0.65" d="M787.6,157.4 L966.6,159.8 L939,465.2 L775.8,457.6 Z"/>
  <path fill="none" stroke="#a08d7a" stroke-width="0.6" d="M963.6,160.6 L936.4,461.8 L777.6,454.4"/>
  <path fill="none" stroke="#7d6486" stroke-width="0.7" d="M787.6,157.4 L775.8,457.6"/>
  <path fill="none" stroke="#55a832" stroke-width="0.8" d="M812,183 L937,184.2 L917.4,439.6 M814.4,185 L934.6,186.2 L915.4,439.4 M812,183 L802.2,435.6 M814.4,185 L804.4,435.8"/>
  <path fill="none" stroke="#3b9d30" stroke-width="1.4" d="M814,228.6 L930,229.8"/>
  <circle cx="950.3" cy="216.7" r="8.4" fill="#ead6b8" stroke="#8a8f5c" stroke-width="0.7"/>
  <path d="M943.6,211 A8.6,8.6 0 0 1 957.6,212.4" fill="none" stroke="#6c9a48" stroke-width="1"/>
  <circle cx="934.3" cy="422.8" r="8" fill="#ead6b8" stroke="#8a8f5c" stroke-width="0.7"/>
  <path d="M927.8,417.6 A8.2,8.2 0 0 1 941.4,418.6" fill="none" stroke="#6c9a48" stroke-width="1"/>
</g>

<!-- labels -->
<g font-family="Liberation Sans, sans-serif" font-size="13" fill="#111" stroke="#fff" stroke-width="2.4" paint-order="stroke" text-anchor="middle">
  <text x="378.6" y="159.8" font-size="11.4">2</text>
  <text x="396" y="443.4" font-size="13.4">3</text>
  <text x="254.6" y="437.8" font-size="14">4</text>
</g>
<text x="320.7" y="299.8" font-family="Liberation Sans, sans-serif" font-size="13.8" fill="#222">A</text>
<path d="M297.4,310.4 Q301,313 305.4,310.4" stroke="#f4f4f4" stroke-width="1.4" fill="none"/>
</svg>
</div>

<!-- scene toolbar -->
<div class="tb" style="left:563.4px;width:16.4px"></div>
<svg class="abs" style="left:566.4px;top:30.6px" width="11" height="11.6" viewBox="0 0 11 11.6"><path d="M1.4,3.6H9.6V11H1.4Z" fill="#cdb98e"/><path d="M0.4,2.4Q0.4,0.6 2.2,0.6H8.8Q10.6,0.6 10.6,2.4V4.2H0.4Z" fill="#d9c79e"/><path d="M0.4,4.2H10.6" stroke="#b9a578" stroke-width="0.6"/><rect x="3.6" y="6" width="3.8" height="2.2" fill="#f3ecd8"/></svg>
<div class="tb" style="left:591px;width:17.2px"></div>
<svg class="abs" style="left:593.6px;top:30.6px" width="12.4" height="12.4" viewBox="0 0 12.4 12.4"><circle cx="6.2" cy="6.2" r="5.4" stroke="#e9ecec" stroke-width="1" fill="none"/><circle cx="6.2" cy="6.2" r="3.4" stroke="#dfe3e3" stroke-width="0.8" fill="none"/><circle cx="6.2" cy="6.2" r="1.7" fill="#8a8d90"/></svg>
<div class="tb" style="left:620px;width:16.4px"></div>
<svg class="abs" style="left:621.2px;top:30px" width="14" height="13" viewBox="0 0 14 13"><rect x="4" y="0.6" width="9.2" height="8.4" rx="0.8" fill="#3f9fd8"/><rect x="0.8" y="3.6" width="9" height="8.6" rx="0.8" fill="#c9d3d6" stroke="#4aa6dc" stroke-width="1.2"/><rect x="4.6" y="4.2" width="4.6" height="4.4" fill="#6fb9e4"/></svg>
<div class="tb" style="left:647.6px;width:16.4px"></div>
<svg class="abs" style="left:649.4px;top:30.6px" width="12.6" height="12.6" viewBox="0 0 12.6 12.6"><path d="M0.8,4V2Q0.8,0.8 2,0.8H4M8.6,0.8H10.6Q11.8,0.8 11.8,2V4M11.8,8.6V10.6Q11.8,11.8 10.6,11.8H8.6M4,11.8H2Q0.8,11.8 0.8,10.6V8.6" stroke="#58aee0" stroke-width="1.5" fill="none"/></svg>
<div class="tb" style="left:676px;width:44.4px"></div>
<div class="abs" style="left:678.6px;top:29px;height:15.4px;line-height:15.2px;font-size:7.7px;color:#6a6f73;white-space:nowrap">更多操作</div>
<svg class="abs" style="left:712.6px;top:34.6px" width="6" height="4" viewBox="0 0 6 4"><path d="M0.5,0.5L3,3.2L5.5,0.5" stroke="#58aee0" stroke-width="0.9" fill="none"/></svg>

<!-- view select -->
<div class="abs" style="left:997.8px;top:494.4px;width:55.6px;height:16.6px;background:rgba(196,200,202,.75);border-radius:2px"></div>
<div class="abs" style="left:999.6px;top:494.4px;height:16.6px;line-height:19px;font-size:7.5px;color:#707477;white-space:nowrap;letter-spacing:0.1px">自由视角</div>
<svg class="abs" style="left:1045px;top:501.8px" width="6" height="4.4" viewBox="0 0 6 4.4"><path d="M0.5,0.6L3,3.4L5.5,0.6" stroke="#3c9ad8" stroke-width="1.2" fill="none"/></svg>

<!-- floating panels -->
<div class="pnwrap">
<div class="pn" style="top:0.4px;height:142px">
  <div class="ph">板件碰撞</div>
  <svg class="px" width="8" height="8" viewBox="0 0 8 8"><path d="M0.8,0.8L7.2,7.2M7.2,0.8L0.8,7.2" stroke="#1a3a36" stroke-width="0.9"/></svg>
  <div class="pb">没有碰撞</div>
  <div class="abs" style="left:0;bottom:0;width:100%;height:22px;background:linear-gradient(to bottom,rgba(255,255,255,0),rgba(205,205,205,.75))"></div>
</div>
<div class="pn" style="top:141.4px;height:140.6px">
  <div class="ph">五金碰撞</div>
  <svg class="px" width="8" height="8" viewBox="0 0 8 8"><path d="M0.8,0.8L7.2,7.2M7.2,0.8L0.8,7.2" stroke="#1a3a36" stroke-width="0.9"/></svg>
  <div class="pb">没有碰撞</div>
</div>
</div>

<!-- RIGHT BAR -->
<div id="rb" style="left:1056.2px;width:23.8px;height:486.5px">
  <div class="v" style="top:95.6px;width:23.4px;line-height:9.2px">布<br>置<br>方<br>案</div>
  <div class="bd" style="top:137.4px;left:5.8px">0</div>
  <div class="v" style="top:180.2px;width:23.4px;line-height:9.2px">外<br>部<br>五<br>金</div>
  <div class="bd" style="top:222.2px;left:5.8px">0</div>
  <div class="v" style="top:273px;width:23.4px;line-height:9.6px">封<br>边</div>
  <div class="bd" style="top:297.2px;left:5.8px">4</div>
  <div class="abs" style="left:0;top:458px;width:23.8px;text-align:center;font-size:5.8px;line-height:8px;color:#eee;white-space:nowrap">工艺状<br>态：有改<br>动</div>
</div>

<!-- FOOTER -->
<div id="ft" style="top:514px;height:18px">
  <div class="abs" style="left:8px;top:4px;color:#3b82d8;white-space:nowrap;font-size:7.6px;line-height:11px">我的方案<span style="color:#333">➡</span>工艺配置[wang]</div>
  <div class="abs" style="left:829.4px;top:4px;white-space:nowrap;font-size:7.75px;line-height:11px;color:#333">当前公司：法尼奥</div>
  <div class="abs" style="left:900.4px;top:4px;white-space:nowrap;font-size:7.75px;line-height:11px;color:#333">公司编号：303</div>
  <div class="abs" style="left:962.2px;top:4px;white-space:nowrap;font-size:7.75px;line-height:11px;color:#333">当前用户：法尼奥03</div>
</div>

<!-- watermark -->
<div class="abs" style="z-index:9;left:54.8px;top:498.4px;font-size:21px;line-height:26px;font-weight:bold;color:rgba(255,255,255,.84);white-space:nowrap;letter-spacing:0.6px;text-shadow:0 0 1.6px rgba(60,60,60,.7),0 0 3px rgba(90,90,90,.3)">大数跨境</div>
<svg class="abs" style="z-index:9;left:6px;top:494px" width="46" height="32" viewBox="6 494 46 32"><g stroke="rgba(255,255,255,.5)" fill="none" stroke-linecap="butt"><path d="M10.4,506L12.8,503.6V522.6" stroke-width="3.2"/><path d="M17.2,508.2A8.2,8.2 0 1 0 32.4,514" stroke-width="3.6"/><path d="M26.6,497.4V509.4" stroke-width="2.2"/><circle cx="30" cy="503.8" r="3.2" stroke-width="2.2"/></g><circle cx="41.8" cy="501" r="3.9" stroke="rgba(150,150,150,.6)" stroke-width="2.6" fill="none"/><circle cx="41.8" cy="501" r="3.9" stroke="rgba(255,255,255,.92)" stroke-width="1.5" fill="none"/></svg>
</body>
</html>
